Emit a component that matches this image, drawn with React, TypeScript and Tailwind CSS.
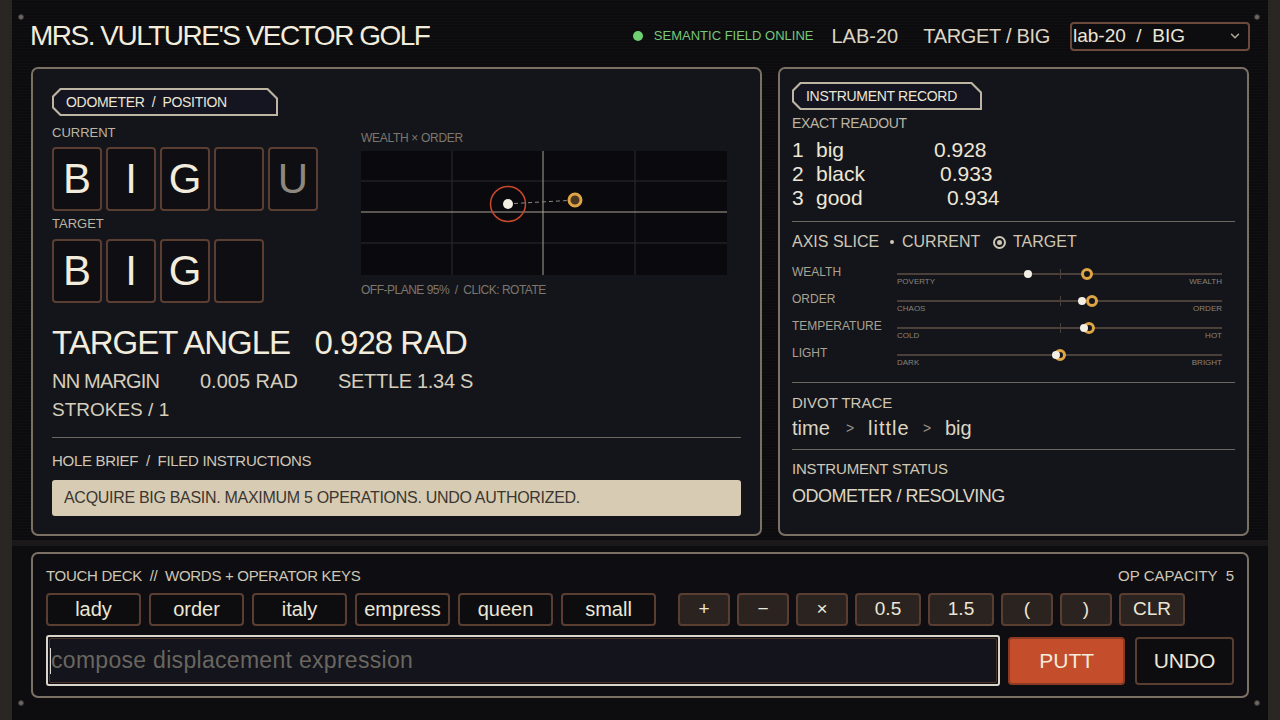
import React from "react";
import { ChevronDown } from "lucide-react";

const FONT = "font-['Liberation_Sans_Narrow','Liberation_Sans',sans-serif]";

const WORDS = ["lady", "order", "italy", "empress", "queen", "small"];
const OPS = [
  { k: "+", w: "w-[52px]" },
  { k: "−", w: "w-[52px]" },
  { k: "×", w: "w-[52px]" },
  { k: "0.5", w: "w-[66px]" },
  { k: "1.5", w: "w-[66px]" },
  { k: "(", w: "w-[52px]" },
  { k: ")", w: "w-[52px]" },
  { k: "CLR", w: "w-[66px]" },
];

const READOUT = [
  { n: "1", word: "big", v: "0.928", pad: "w-[118px]" },
  { n: "2", word: "black", v: "0.933", pad: "w-[124px]" },
  { n: "3", word: "good", v: "0.934", pad: "w-[131px]" },
];

const AXES = [
  { name: "WEALTH", lo: "POVERTY", hi: "WEALTH", cur: 0.403, tgt: 0.584 },
  { name: "ORDER", lo: "CHAOS", hi: "ORDER", cur: 0.569, tgt: 0.6 },
  { name: "TEMPERATURE", lo: "COLD", hi: "HOT", cur: 0.575, tgt: 0.59 },
  { name: "LIGHT", lo: "DARK", hi: "BRIGHT", cur: 0.49, tgt: 0.5 },
];

function Chip({ children, w }: { children: React.ReactNode; w: string }) {
  return (
    <div className={w + " bg-[#bdb4a2] p-[2px] [clip-path:polygon(8px_0,calc(100%_-_10px)_0,100%_10px,100%_100%,8px_100%,0_calc(100%_-_8px),0_8px)]"}>
      <div className="bg-[#141520] h-[24px] pl-[12px] flex items-center text-[14px] tracking-[-0.3px] text-[#ece6d6] whitespace-pre [clip-path:polygon(7px_0,calc(100%_-_9px)_0,100%_9px,100%_100%,7px_100%,0_calc(100%_-_7px),0_7px)]">
        {children}
      </div>
    </div>
  );
}

function Tile({ ch, dim }: { ch?: string; dim?: boolean }) {
  return (
    <div
      className={
        "w-[50px] h-[64px] rounded-[4px] border-2 border-[#5a3e31] bg-[#0e0e13] flex items-center justify-center text-[42px] leading-none " +
        (dim ? "text-[#8d887e]" : "text-[#f2ecdc]")
      }
    >
      {ch}
    </div>
  );
}

function Screw() {
  return <div className="w-[6px] h-[6px] rounded-full bg-[#6e6862] border border-[#3a3634]" />;
}

function Chart() {
  return (
    <svg width="366" height="124" viewBox="0 0 366 124" className="block">
      <rect width="366" height="124" fill="#0a0a0e" />
      <line x1="91" y1="0" x2="91" y2="124" stroke="#2c2c30" strokeWidth="1" />
      <line x1="274" y1="0" x2="274" y2="124" stroke="#2c2c30" strokeWidth="1" />
      <line x1="0" y1="30" x2="366" y2="30" stroke="#2c2c30" strokeWidth="1" />
      <line x1="0" y1="92" x2="366" y2="92" stroke="#2c2c30" strokeWidth="1" />
      <line x1="182" y1="0" x2="182" y2="124" stroke="#a9a294" strokeWidth="1" />
      <line x1="0" y1="61" x2="366" y2="61" stroke="#a9a294" strokeWidth="1" />
      <circle cx="147" cy="53" r="17.5" fill="none" stroke="#c8482b" strokeWidth="1.5" />
      <line x1="153" y1="52.5" x2="207" y2="49.5" stroke="#8a8680" strokeWidth="1" strokeDasharray="4 3" />
      <circle cx="147" cy="53" r="5" fill="#f3efe4" />
      <circle cx="214" cy="49" r="6" fill="#4a3622" stroke="#e0a446" strokeWidth="3" />
    </svg>
  );
}

export default function App() {
  return (
    <div className={"w-[1280px] h-[720px] flex bg-[#2a2623] overflow-hidden " + FONT}>
      <div className="w-[12px] shrink-0" />
      <div className="flex-1 flex flex-col bg-[repeating-linear-gradient(0deg,#0c0c0e_0px,#0c0c0e_2px,#101012_2px,#101012_3px)]">
        {/* header */}
        <div className="h-[60px] shrink-0 relative flex items-center justify-between pl-[18px] pr-[18px] pt-[12px]">
          <div className="absolute left-[6px] top-[14px]"><Screw /></div>
          <div className="absolute right-[8px] top-[14px]"><Screw /></div>
          <div className="text-[28px] leading-none text-[#f2ecdc] tracking-[-1.5px]">
            MRS. VULTURE'S VECTOR GOLF
          </div>
          <div className="flex items-center">
            <div className="w-[10px] h-[10px] rounded-full bg-[#6fcf73]" />
            <div className="ml-[11px] text-[13px] text-[#78c77a]">SEMANTIC FIELD ONLINE</div>
            <div className="ml-[18px] text-[20px] text-[#ddd5c3]">LAB-20</div>
            <div className="ml-[25px] text-[20px] text-[#ddd5c3] tracking-[-0.3px]">TARGET / BIG</div>
            <div className="ml-[20px] w-[180px] h-[29px] rounded-[4px] border-2 border-[#6b4a3b] bg-[#0d0d10] flex items-center justify-between pl-[1px] pr-[6px]">
              <span className="text-[19px] text-[#ece6d6] whitespace-pre">lab-20  /  BIG</span>
              <ChevronDown className="w-[14px] h-[14px] text-[#b0a898]" strokeWidth={2.5} />
            </div>
          </div>
        </div>

        {/* main */}
        <div className="h-[480px] shrink-0 flex gap-[16px] pl-[19px] pt-[7px]">
          {/* left panel */}
          <div className="w-[731px] h-[469px] rounded-[7px] border-2 border-[#7a7064] bg-[#14151a] pl-[19px] pr-[19px] pt-[19px]">
            <div className="flex">
              <div className="w-[266px]">
                <Chip w="w-[226px]">ODOMETER  /  POSITION</Chip>
                <div className="mt-[8px] text-[13px] leading-[18px] text-[#bdb5a4]">CURRENT</div>
                <div className="mt-[5px] flex gap-[4px]">
                  <Tile ch="B" />
                  <Tile ch="I" />
                  <Tile ch="G" />
                  <Tile />
                  <Tile ch="U" dim />
                </div>
                <div className="mt-[4px] text-[13px] leading-[18px] text-[#bdb5a4]">TARGET</div>
                <div className="mt-[6px] flex gap-[4px]">
                  <Tile ch="B" />
                  <Tile ch="I" />
                  <Tile ch="G" />
                  <Tile />
                </div>
              </div>
              <div className="ml-[43px] pt-[43px]">
                <div className="text-[12px] leading-[14px] text-[#7c776e] tracking-[-0.3px]">WEALTH × ORDER</div>
                <div className="mt-[6px]"><Chart /></div>
                <div className="mt-[8px] text-[12px] leading-[14px] text-[#7c776e] tracking-[-0.5px]">OFF-PLANE 95%&nbsp;&nbsp;/&nbsp;&nbsp;CLICK: ROTATE</div>
              </div>
            </div>

            <div className="mt-[20px] text-[33px] leading-[40px] text-[#f2ecdc] tracking-[-1px] whitespace-pre">TARGET ANGLE   0.928 RAD</div>
            <div className="mt-[5px] flex text-[20px] leading-[26px] text-[#d6cebc]">
              <span className="w-[148px] tracking-[-0.8px]">NN MARGIN</span>
              <span className="w-[138px]">0.005 RAD</span>
              <span className="tracking-[-0.3px]">SETTLE 1.34 S</span>
            </div>
            <div className="mt-[3px] text-[19px] leading-[26px] text-[#d6cebc]">STROKES / 1</div>
            <div className="mt-[14px] h-px bg-[#6d685f]" />
            <div className="mt-[14px] text-[15px] leading-[18px] text-[#cfc7b5] tracking-[-0.3px] whitespace-pre">HOLE BRIEF  /  FILED INSTRUCTIONS</div>
            <div className="mt-[10px] h-[36px] rounded-[3px] bg-[#d7ccb3] flex items-center pl-[12px] text-[16px] tracking-[-0.3px] text-[#3b3631]">
              ACQUIRE BIG BASIN. MAXIMUM 5 OPERATIONS. UNDO AUTHORIZED.
            </div>
          </div>

          {/* right panel */}
          <div className="w-[471px] h-[469px] rounded-[7px] border-2 border-[#7a7064] bg-[#14151a] pl-[12px] pr-[12px] pt-[13px]">
            <Chip w="w-[190px]">INSTRUMENT RECORD</Chip>
            <div className="mt-[4px] text-[14px] leading-[18px] tracking-[-0.3px] text-[#bdb5a4]">EXACT READOUT</div>
            <div className="mt-[6px] text-[21px] leading-[24px] text-[#ece6d6]">
              {READOUT.map((r) => (
                <div key={r.n} className="flex">
                  <span className="w-[24px]">{r.n}</span>
                  <span className={r.pad}>{r.word}</span>
                  <span>{r.v}</span>
                </div>
              ))}
            </div>
            <div className="mt-[11px] h-px bg-[#6d685f]" />
            <div className="mt-[10px] flex items-center text-[16px] leading-[20px] text-[#cfc7b5] whitespace-pre">
              <span className="w-[88px]">AXIS SLICE</span>
              <span className="ml-[10px] w-[4px] h-[4px] rounded-full bg-[#cfc7b5]" />
              <span className="ml-[8px] w-[77px]">CURRENT</span>
              <span className="ml-[14px] w-[13px] h-[13px] rounded-full border-2 border-[#cfc7b5] flex items-center justify-center">
                <span className="w-[5px] h-[5px] rounded-full bg-[#cfc7b5]" />
              </span>
              <span className="ml-[7px]">TARGET</span>
            </div>
            <div className="mt-[12px] flex flex-col">
              {AXES.map((a) => (
                <div key={a.name} className="h-[27px] flex">
                  <div className="w-[105px] text-[12px] leading-[16px] text-[#aaa293]">{a.name}</div>
                  <div className="flex-1 pr-[13px] pt-[9px]">
                    <div className="relative h-[2px] bg-[#4a4039]">
                      <div className="absolute left-1/2 top-[-4px] w-px h-[10px] bg-[#4a4039]" />
                      <div
                        className="absolute top-[-5px] w-[12px] h-[12px] -ml-[6px] rounded-full border-[3px] border-[#dfa444] bg-[#14151a]"
                        style={{ left: `${a.tgt * 100}%` }}
                      />
                      <div
                        className="absolute top-[-3px] w-[8px] h-[8px] -ml-[4px] rounded-full bg-[#f3efe4]"
                        style={{ left: `${a.cur * 100}%` }}
                      />
                    </div>
                    <div className="mt-[2px] flex justify-between text-[8px] leading-[10px] text-[#8a8478]">
                      <span>{a.lo}</span>
                      <span>{a.hi}</span>
                    </div>
                  </div>
                </div>
              ))}
            </div>
            <div className="mt-[10px] h-px bg-[#6d685f]" />
            <div className="mt-[10px] text-[15px] leading-[20px] text-[#cfc7b5]">DIVOT TRACE</div>
            <div className="mt-[3px] flex items-center text-[20px] leading-[24px] text-[#ddd5c3]">
              <span className="w-[54px]">time</span>
              <span className="w-[22px] text-[14px] text-[#9a9488]">&gt;</span>
              <span className="w-[55px] tracking-[1px]">little</span>
              <span className="w-[22px] text-[14px] text-[#9a9488]">&gt;</span>
              <span>big</span>
            </div>
            <div className="mt-[9px] h-px bg-[#6d685f]" />
            <div className="mt-[9px] text-[15px] leading-[20px] tracking-[-0.2px] text-[#cfc7b5]">INSTRUMENT STATUS</div>
            <div className="mt-[6px] text-[18px] leading-[22px] tracking-[-0.5px] text-[#ddd5c3]">ODOMETER / RESOLVING</div>
          </div>
        </div>

        {/* band */}
        <div className="h-[6px] shrink-0 bg-[#1b1819]" />

        {/* bottom deck */}
        <div className="flex-1 relative pl-[19px] pt-[6px] bg-[#0d0d10]">
          <div className="absolute left-[6px] bottom-[14px]"><Screw /></div>
          <div className="absolute right-[8px] bottom-[14px]"><Screw /></div>
          <div className="w-[1218px] h-[146px] rounded-[7px] border-2 border-[#7a7064] bg-[#0e0e12] pl-[13px] pr-[13px] pt-[13px]">
            <div className="flex justify-between text-[15px] leading-[18px] text-[#cfc7b5]">
              <span className="whitespace-pre tracking-[-0.3px]">TOUCH DECK  //  WORDS + OPERATOR KEYS</span>
              <span className="whitespace-pre">OP CAPACITY  5</span>
            </div>
            <div className="mt-[8px] flex items-center">
              <div className="flex gap-[8px]">
                {WORDS.map((w) => (
                  <div key={w} className="w-[95px] h-[33px] rounded-[4px] border-2 border-[#5a3e31] bg-[#0d0d10] flex items-center justify-center text-[20px] leading-none pb-[2px] text-[#ece6d6]">
                    {w}
                  </div>
                ))}
              </div>
              <div className="ml-[22px] flex gap-[7px]">
                {OPS.map((o) => (
                  <div key={o.k} className={o.w + " h-[33px] rounded-[4px] border-2 border-[#5a3e31] bg-[#2a2320] flex items-center justify-center text-[19px] text-[#ece6d6]"}>
                    {o.k}
                  </div>
                ))}
              </div>
            </div>
            <div className="mt-[9px] flex items-center">
              <div className="w-[955px] h-[51px] rounded-[3px] border-2 border-[#d9d5cc] p-px">
                <div className="h-full rounded-[2px] border border-[#4a3428] bg-[#13141c] flex items-center text-[23px] text-[#6a665f]">
                  <span className="w-px h-[26px] bg-[#d9d5cc]" />
                  <span className="tracking-[0.3px]">compose displacement expression</span>
                </div>
              </div>
              <div className="ml-[8px] w-[117px] h-[48px] rounded-[4px] border-2 border-[#8c3a22] bg-[#c44d2c] flex items-center justify-center text-[21px] text-[#f2ecdc]">
                PUTT
              </div>
              <div className="ml-[10px] w-[99px] h-[48px] rounded-[4px] border-2 border-[#5a3e31] bg-[#0d0d10] flex items-center justify-center text-[21px] text-[#ece6d6]">
                UNDO
              </div>
            </div>
          </div>
        </div>
      </div>
      <div className="w-[12px] shrink-0" />
    </div>
  );
}
